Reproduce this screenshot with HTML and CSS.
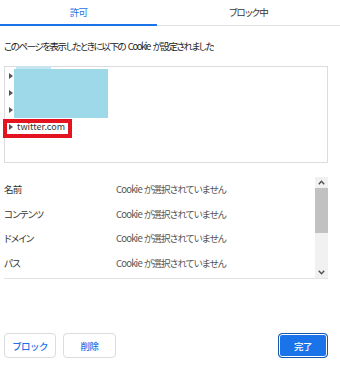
FILE: index.html
```html
<!DOCTYPE html>
<html lang="ja">
<head>
<meta charset="utf-8">
<link rel="stylesheet" href="styles.css">
</head>
<body>
<div class="dialog">
  <div class="tabs">
    <div class="tab active">許可</div>
    <div class="tab">ブロック中</div>
  </div>
  <p class="intro">このページを表示したときに以下の Cookie が設定されました</p>
  <div class="tree">
    <div class="node"><span class="arrow"></span><span class="label">example.com</span></div>
    <div class="node"><span class="arrow"></span><span class="label">example.net</span></div>
    <div class="node"><span class="arrow"></span><span class="label">example.org</span></div>
    <div class="node"><span class="arrow"></span><span class="label">twitter.com</span></div>
    <div class="strip"></div>
    <div class="redact"></div>
    <div class="mark"></div>
  </div>
  <div class="details">
    <div class="rows">
      <div class="row"><span class="key">名前</span><span class="val">Cookie が選択されていません</span></div>
      <div class="row"><span class="key">コンテンツ</span><span class="val">Cookie が選択されていません</span></div>
      <div class="row"><span class="key">ドメイン</span><span class="val">Cookie が選択されていません</span></div>
      <div class="row"><span class="key">パス</span><span class="val">Cookie が選択されていません</span></div>
    </div>
    <div class="scrollbar">
      <div class="sb-btn"><svg width="7" height="5" viewBox="0 0 7 5"><path d="M0.8 4.2 L3.5 1.3 L6.2 4.2" fill="none" stroke="#505050" stroke-width="1.4"/></svg></div>
      <div class="sb-thumb"></div>
      <div class="sb-track"></div>
      <div class="sb-btn"><svg width="7" height="5" viewBox="0 0 7 5"><path d="M0.8 0.8 L3.5 3.7 L6.2 0.8" fill="none" stroke="#505050" stroke-width="1.4"/></svg></div>
    </div>
  </div>
  <div class="footer">
    <button class="btn">ブロック</button>
    <button class="btn">削除</button>
    <span class="spacer"></span>
    <button class="btn primary">完了</button>
  </div>
</div>
</body>
</html>
```

FILE: styles.css
```css
* { box-sizing: border-box; }
html, body {
  margin: 0;
  padding: 0;
  background: #fff;
}
body {
  font-family: "Noto Sans CJK JP", "Noto Sans", sans-serif;
  font-size: 9.5px;
  letter-spacing: -0.8px;
  color: #333;
  font-feature-settings: "palt";
}
.dialog {
  width: 340px;
  height: 371px;
}
.tabs {
  display: flex;
  height: 26px;
  border-bottom: 1px solid #e3e3e3;
}
.tab {
  flex: 1;
  text-align: center;
  line-height: 25px;
  color: #333;
}
.tab.active {
  flex: 0 0 157px;
  color: #1a73e8;
  border-bottom: 2px solid #1a73e8;
  margin-bottom: -1px;
}
.intro {
  margin: 12px 0 0 4px;
  line-height: 16px;
  letter-spacing: -1.45px;
  word-spacing: 2px;
  color: #222;
}
.tree {
  position: relative;
  margin: 12px 12px 0 4px;
  height: 97px;
  border: 1px solid #dcdcdc;
}
.node {
  display: flex;
  align-items: center;
  height: 17px;
  padding-left: 4px;
  gap: 4px;
}
.arrow {
  width: 0;
  height: 0;
  border-left: 4px solid #555;
  border-top: 3px solid transparent;
  border-bottom: 3px solid transparent;
}
.label {
  font-size: 9px;
  letter-spacing: 0;
  color: #333;
}
.strip {
  position: absolute;
  left: 11px;
  top: -1px;
  width: 35px;
  height: 3px;
  background: #c8e4f1;
}
.redact {
  position: absolute;
  left: 9px;
  top: 2px;
  width: 94px;
  height: 49px;
  background: #9ed9ea;
}
.mark {
  position: absolute;
  left: -2px;
  top: 52px;
  width: 69px;
  height: 19px;
  border: 4px solid #e3141f;
}
.details {
  display: flex;
  margin: 14px 12px 0 4px;
  height: 102px;
  border-bottom: 1px solid #e3e3e3;
}
.rows {
  flex: 1;
}
.row {
  display: flex;
  align-items: center;
  height: 24.5px;
}
.key {
  width: 112px;
  color: #333;
}
.val {
  color: #555;
  word-spacing: 0.5px;
}
.scrollbar {
  display: flex;
  flex-direction: column;
  width: 13px;
  background: #f1f1f1;
}
.sb-btn {
  height: 11px;
  display: flex;
  align-items: center;
  justify-content: center;
}
.sb-thumb {
  height: 45px;
  background: #c1c1c1;
}
.sb-track {
  flex: 1;
}
.footer {
  display: flex;
  gap: 7px;
  margin: 54px 12px 0 4px;
}
.spacer {
  flex: 1;
}
.btn {
  height: 25px;
  width: 52px;
  padding: 0;
  border: 1px solid #dadce0;
  border-radius: 4px;
  background: #fff;
  color: #1a73e8;
  font-family: inherit;
  font-size: 9.5px;
  letter-spacing: -0.6px;
  font-weight: 500;
}
.btn + .btn {
  width: 53px;
}
.btn.primary {
  width: 50px;
  background: #1a73e8;
  color: #fff;
  border: 1px solid #1558b0;
  box-shadow: inset 0 0 0 1px #fff;
}
```
